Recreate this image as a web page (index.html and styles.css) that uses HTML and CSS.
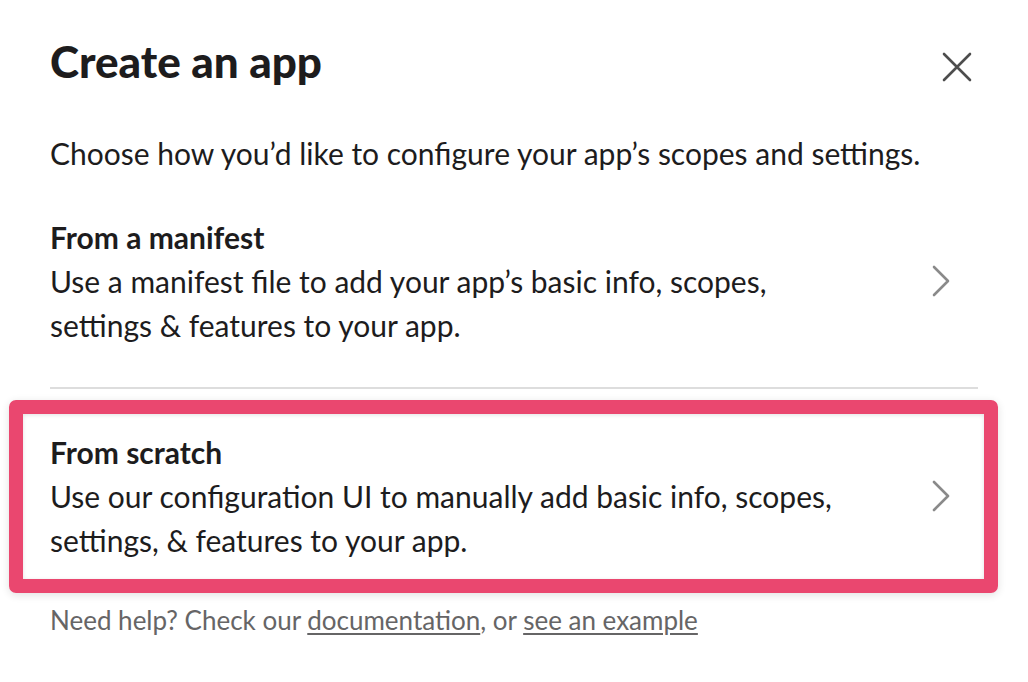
FILE: index.html
```html
<!DOCTYPE html>
<html>
<head>
<meta charset="utf-8">
<link rel="stylesheet" href="styles.css">
</head>
<body>
<div class="modal">
  <div class="header">
    <h1 class="title">Create an app</h1>
    <button class="close" aria-label="Close">
      <svg width="30" height="30" viewBox="0 0 30 30"><path d="M2 2 L28 28 M28 2 L2 28" stroke="#4d4d4d" stroke-width="2.6" stroke-linecap="round" fill="none"/></svg>
    </button>
  </div>
  <p class="intro">Choose how you’d like to configure your app’s scopes and settings.</p>
  <div class="option">
    <div class="option-text">
      <div class="option-title">From a manifest</div>
      <div class="option-desc">Use a manifest file to add your app’s basic info, scopes, settings &amp; features to your app.</div>
    </div>
    <svg class="chev" width="18" height="32" viewBox="0 0 18 32"><path d="M2 2 L16 16 L2 30" stroke="#8a8a8a" stroke-width="2.6" stroke-linecap="round" stroke-linejoin="round" fill="none"/></svg>
  </div>
  <div class="divider"></div>
  <div class="highlight">
    <div class="option option-hl">
      <div class="option-text">
        <div class="option-title">From scratch</div>
        <div class="option-desc">Use our configuration UI to manually add basic info, scopes, settings, &amp; features to your app.</div>
      </div>
      <svg class="chev" width="18" height="32" viewBox="0 0 18 32"><path d="M2 2 L16 16 L2 30" stroke="#8a8a8a" stroke-width="2.6" stroke-linecap="round" stroke-linejoin="round" fill="none"/></svg>
    </div>
  </div>
  <p class="help">Need help? Check our <a href="#">documentation</a>, or <a href="#">see an example</a></p>
</div>
</body>
</html>
```

FILE: styles.css
```css
html, body {
  margin: 0;
  padding: 0;
  background: #ffffff;
}
body {
  font-family: Lato, "Noto Sans", sans-serif;
  color: #1d1c1d;
  width: 1028px;
  height: 682px;
  overflow: hidden;
}
.modal {
  padding: 31px 50px 0 50px;
}
.header {
  display: flex;
  align-items: center;
  justify-content: space-between;
}
.title {
  margin: 0;
  font-size: 44px;
  font-weight: 900;
  line-height: 60px;
}
.close {
  border: none;
  background: none;
  padding: 0;
  margin-right: 6px;
  width: 30px;
  height: 30px;
  display: flex;
  margin-top: 12px;
}
.intro {
  margin: 40px 0 24px 0;
  font-size: 30px;
  line-height: 44px;
}
.option {
  display: flex;
  align-items: center;
  justify-content: space-between;
  padding: 16px 0 15px 0;
}
.option-hl {
  padding: 16px 0 17px 0;
}
.option-text {
  width: 800px;
}
.option-title {
  font-size: 30px;
  font-weight: 700;
  line-height: 44px;
}
.option-desc {
  font-size: 30px;
  line-height: 44px;
}
.chev {
  margin-right: 28px;
  flex: none;
}
.divider {
  height: 2px;
  background: #dddddd;
  margin-top: 25px;
}
.highlight {
  margin: 11px -20px 0 -41px;
  border: 14px solid #ea476f;
  border-radius: 7px;
  padding: 0 6px 0 27px;
  box-shadow: 0 2px 8px rgba(0,0,0,0.12), inset 0 1px 4px rgba(0,0,0,0.12);
}
.help {
  margin: 7px 0 0 0;
  font-size: 26px;
  line-height: 40px;
  color: #666566;
}
.help a {
  color: #666566;
  text-decoration: underline;
  text-underline-offset: 3px;
}
```
